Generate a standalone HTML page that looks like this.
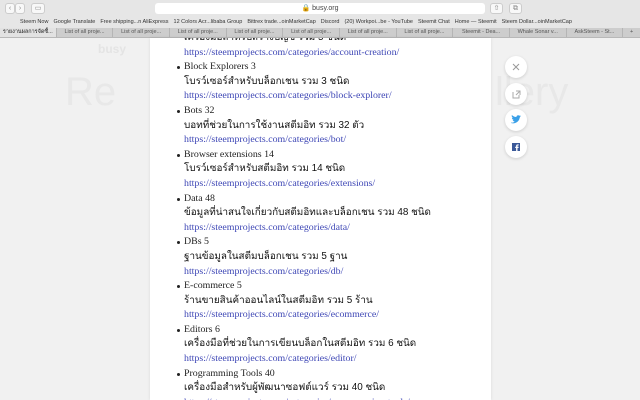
<!DOCTYPE html>
<html><head><meta charset="utf-8"><style>
*{margin:0;padding:0;box-sizing:border-box}
body{width:640px;height:400px;overflow:hidden;background:#f1f1f1;font-family:"Liberation Sans",sans-serif;position:relative}
.tb{position:absolute;left:0;top:0;width:640px;height:17px;background:#e6e6e6}
.url{position:absolute;left:155px;top:3px;width:330px;height:11px;background:#fff;border-radius:3px;font-size:7px;color:#444;text-align:center;line-height:11px}
.btn{position:absolute;top:3px;height:11px;background:#f8f8f8;border:1px solid #ccc;border-radius:3px;font-size:7px;color:#888;text-align:center;line-height:9px}
.bm{position:absolute;left:0;top:17px;width:640px;height:11px;background:#e6e6e6;font-size:5.5px;color:#333;line-height:11px;white-space:nowrap;padding-left:20px}
.bm span{margin-right:5px}
.tabs{position:absolute;left:0;top:28px;width:640px;height:10px;background:#cdcdcd;border-bottom:1px solid #b8b8b8;display:flex;font-size:5.5px;color:#555;line-height:9px}
.tab{flex:1;text-align:center;border-left:1px solid #b5b5b5}
.tab.a{background:#e2e2e2;border:none;color:#222}
.side{position:absolute;color:#e4e4e4}
.panel{position:absolute;left:150px;top:38px;width:341px;height:362px;background:#fff;box-shadow:0 0 3px rgba(0,0,0,.1);overflow:hidden}
ul{position:absolute;left:34px;top:-7px;font-family:"Liberation Serif","Noto Serif CJK SC",serif;font-size:9.9px;line-height:14.6px;color:#222;list-style:none}
li{position:relative}
li.b:before{content:"";position:absolute;left:-7px;top:6px;width:3px;height:3px;border-radius:50%;background:#222}
.th{font-family:"Liberation Sans","Noto Sans CJK SC",sans-serif;font-size:9.9px;color:#111;white-space:nowrap}
a{color:#3d46b5;text-decoration:none;display:block}
.c{position:absolute;left:505px;width:22px;height:22px;border-radius:50%;background:#fff;box-shadow:0 1px 3px rgba(0,0,0,.15)}
</style></head><body>
<div class="tb">
<div class="btn" style="left:5px;width:10px">‹</div><div class="btn" style="left:15px;width:10px">›</div>
<div class="btn" style="left:31px;width:14px">▭</div>
<div class="url">🔒 busy.org</div>
<div class="btn" style="left:490px;width:13px">⇧</div><div class="btn" style="left:509px;width:13px">⧉</div>
</div>
<div class="bm"><span>Steem Now</span><span>Google Translate</span><span>Free shipping...n AliExpress</span><span>12 Colors Acr...libaba Group</span><span>Bittrex trade...oinMarketCap</span><span>Discord</span><span>(20) Workpoi...be - YouTube</span><span>Steemit Chat</span><span>Home — Steemit</span><span>Steem Dollar...oinMarketCap</span></div>
<div class="tabs"><div class="tab a">รายงานผลการจัดซื้...</div><div class="tab">List of all proje...</div><div class="tab">List of all proje...</div><div class="tab">List of all proje...</div><div class="tab">List of all proje...</div><div class="tab">List of all proje...</div><div class="tab">List of all proje...</div><div class="tab">List of all proje...</div><div class="tab">Steemit - Dea...</div><div class="tab">Whale Sonar v...</div><div class="tab">AskSteem - St...</div><div class="tab" style="flex:.3">+</div></div>
<div class="side" style="left:98px;top:42px;font-size:12px;font-weight:bold">busy</div>
<div class="side" style="left:65px;top:70px;font-size:40px;color:#e8e8e8">Re</div>
<div class="side" style="left:495px;top:70px;font-size:40px;color:#e8e8e8">llery</div>
<div class="panel"><ul>
<li><div class="th">เครื่องมือสำหรับสร้างบัญชี รวม 5 ชนิด</div><a>https://steemprojects.com/categories/account-creation/</a></li>
<li class="b">Block Explorers 3<div class="th">โบรว์เซอร์สำหรับบล็อกเชน รวม 3 ชนิด</div><a>https://steemprojects.com/categories/block-explorer/</a></li>
<li class="b">Bots 32<div class="th">บอทที่ช่วยในการใช้งานสตีมอิท รวม 32 ตัว</div><a>https://steemprojects.com/categories/bot/</a></li>
<li class="b">Browser extensions 14<div class="th">โบรว์เซอร์สำหรับสตีมอิท รวม 14 ชนิด</div><a>https://steemprojects.com/categories/extensions/</a></li>
<li class="b">Data 48<div class="th">ข้อมูลที่น่าสนใจเกี่ยวกับสตีมอิทและบล็อกเชน รวม 48 ชนิด</div><a>https://steemprojects.com/categories/data/</a></li>
<li class="b">DBs 5<div class="th">ฐานข้อมูลในสตีมบล็อกเชน รวม 5 ฐาน</div><a>https://steemprojects.com/categories/db/</a></li>
<li class="b">E-commerce 5<div class="th">ร้านขายสินค้าออนไลน์ในสตีมอิท รวม 5 ร้าน</div><a>https://steemprojects.com/categories/ecommerce/</a></li>
<li class="b">Editors 6<div class="th">เครื่องมือที่ช่วยในการเขียนบล็อกในสตีมอิท รวม 6 ชนิด</div><a>https://steemprojects.com/categories/editor/</a></li>
<li class="b">Programming Tools 40<div class="th">เครื่องมือสำหรับผู้พัฒนาซอฟต์แวร์ รวม 40 ชนิด</div><a>https://steemprojects.com/categories/programming-tools/</a></li>
</ul></div>
<div class="c" style="top:56px"><svg width="22" height="22"><path d="M8 8l6 6M14 8l-6 6" stroke="#999" stroke-width="1"/></svg></div>
<div class="c" style="top:83px"><svg width="22" height="22"><path d="M8 9v6h6v-3M11 8h4v4M15 8l-4 4" stroke="#aaa" fill="none" stroke-width="1"/></svg></div>
<div class="c" style="top:109px"><svg width="22" height="22"><path d="M6 14c3 1 6 0 8-3l1-3 1-1-1 .3.6-1-1.2.4c-1-1-3-.5-3 1.3-2 0-3.5-1-4.5-2-.5 1 0 2.3 1 3-.5 0-1-.2-1-.3 0 1 .8 2 1.8 2.2-.4.2-.8.2-1 .1.3 1 1.2 1.5 2 1.6-1 .8-2.3 1.2-3.7 1z" fill="#3aa0e8"/></svg></div>
<div class="c" style="top:136px"><svg width="22" height="22"><rect x="7" y="7" width="8" height="8" fill="#3b5998"/><path d="M12.5 15v-3h1l.2-1.2h-1.2v-.7c0-.4.2-.6.6-.6h.6V8.4h-1c-1 0-1.6.6-1.6 1.6v.8h-.9V12h.9v3z" fill="#fff"/></svg></div>
</body></html>
